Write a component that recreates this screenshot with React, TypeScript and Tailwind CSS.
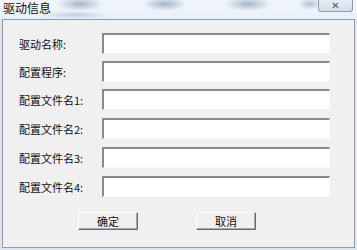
import React from "react";

const labels = ["驱动名称:", "配置程序:", "配置文件名1:", "配置文件名2:", "配置文件名3:", "配置文件名4:"];
const tops = ["mt-[13px]", "mt-[7px]", "mt-[7px]", "mt-[8px]", "mt-[8px]", "mt-[8px]"];

function Field({ label, mt }: { label: string; mt: string }) {
  return (
    <div className={`flex items-center ${mt}`}>
      <div className="w-[99px] shrink-0 pl-[16px] text-[11px] leading-[12px] text-[#111] whitespace-nowrap">{label}</div>
      <div className="w-[228px] h-[21px] shrink-0 border-t-2 border-l-2 border-t-[#8a8a8a] border-l-[#8a8a8a] border-b border-r border-b-[#f8f8f8] border-r-[#f8f8f8] bg-white" />
    </div>
  );
}

function Btn({ children }: { children: React.ReactNode }) {
  return (
    <div className="w-[60px] h-[18px] border border-t-white border-l-white border-b-[#6b6b6b] border-r-[#6b6b6b] bg-[#f0f0f0] flex items-center justify-center text-[11px] leading-[12px] text-[#111] shadow-[inset_-1px_-1px_0_#a8a8a8]">
      {children}
    </div>
  );
}

export default function App() {
  return (
    <div
      className="w-[357px] h-[250px] overflow-hidden bg-[#dbe6f1]"
      style={{ fontFamily: '"Noto Sans CJK SC", "Noto Sans", sans-serif' }}
    >
      {/* title bar glass */}
      <div className="h-[19px] flex items-start justify-between pl-[3px] pr-[4px] bg-[radial-gradient(ellipse_24px_7px_at_80px_4px,#a4b4c8,transparent),radial-gradient(ellipse_22px_7px_at_165px_4px,#a4b4c8,transparent),radial-gradient(ellipse_24px_7px_at_248px_4px,#a4b4c8,transparent),radial-gradient(ellipse_12px_6px_at_310px_4px,#b4c3d4,transparent),radial-gradient(ellipse_32px_4px_at_75px_15px,#c2cfdf,transparent),linear-gradient(180deg,#f2f7fc_0%,#e6eff8_100%)]">
        <div className="pt-[1px] text-[12px] leading-[13px] text-[#111]">驱动信息</div>
        <div className="w-[35px] h-[12px] rounded-b-[3px] border border-t-0 border-[#8c9bb0] bg-[linear-gradient(180deg,#e8eef5,#d3dce8)] flex items-center justify-center">
          <span className="text-[10px] leading-[10px] text-[#4c5a6e] font-bold" style={{ fontFamily: '"DejaVu Sans", sans-serif' }}>✕</span>
        </div>
      </div>
      {/* client area */}
      <div className="mx-[2px] h-[229px] border border-[#9a9a9a] bg-[#f0f0f0] flex flex-col">
        {labels.map((l, i) => (
          <Field key={l} label={l} mt={tops[i]} />
        ))}
        <div className="flex mt-[15px]">
          <div className="ml-[75px]">
            <Btn>确定</Btn>
          </div>
          <div className="ml-[58px]">
            <Btn>取消</Btn>
          </div>
        </div>
      </div>
    </div>
  );
}
